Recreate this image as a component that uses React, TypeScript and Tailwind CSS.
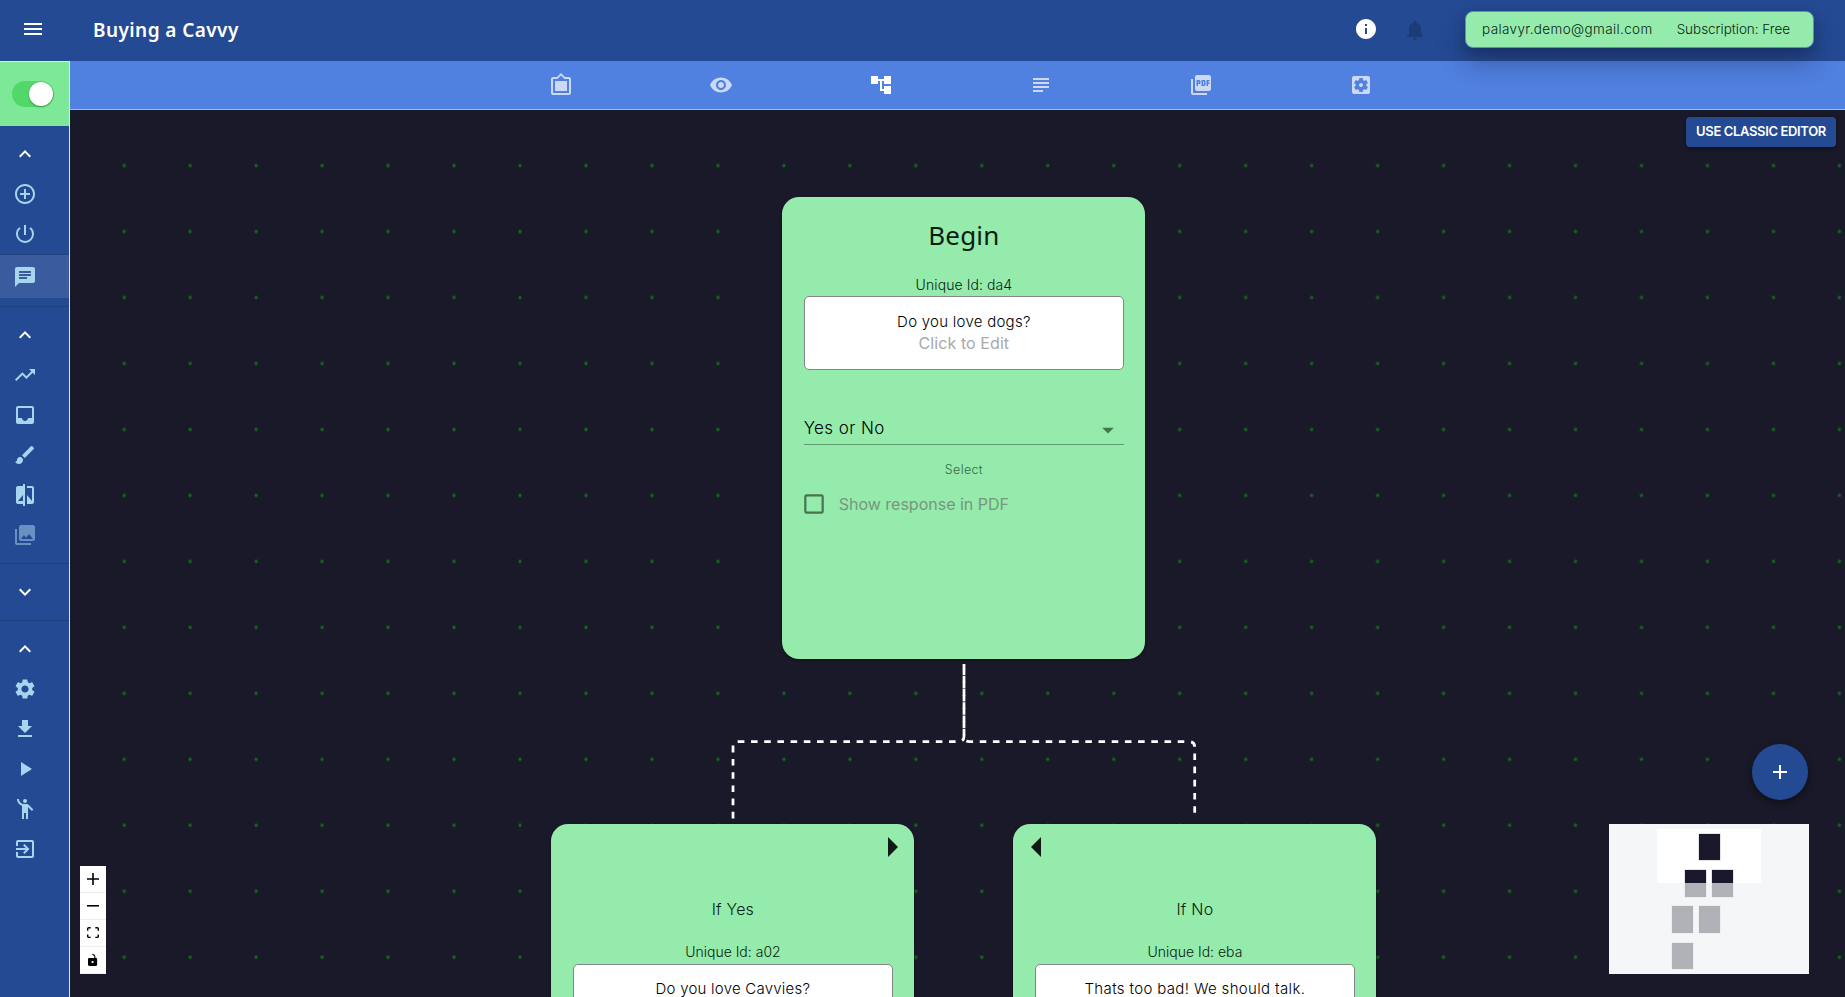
import type { ReactNode } from "react";
import type { IconType } from "react-icons";
import {
  MdAccountTree,
  MdAddCircleOutline,
  MdArrowDropDown,
  MdBrush,
  MdChat,
  MdCheckBoxOutlineBlank,
  MdCompare,
  MdEmojiPeople,
  MdExpandLess,
  MdExpandMore,
  MdFilterFrames,
  MdGetApp,
  MdInbox,
  MdInfo,
  MdMenu,
  MdNotifications,
  MdPhotoLibrary,
  MdPictureAsPdf,
  MdPlayArrow,
  MdPowerSettingsNew,
  MdSettings,
  MdSettingsApplications,
  MdSubject,
  MdTrendingUp,
  MdVisibility,
} from "react-icons/md";

function ExitIcon() {
  return (
    <svg viewBox="0 0 24 24" className="size-6" fill="currentColor">
      <path d="M10.09 15.59 11.5 17l5-5-5-5-1.41 1.41L12.67 11H3v2h9.67l-2.58 2.59zM19 3H5a2 2 0 0 0-2 2v4h2V5h14v14H5v-4H3v4a2 2 0 0 0 2 2h14c1.1 0 2-.9 2-2V5c0-1.1-.9-2-2-2z" />
    </svg>
  );
}

function SideItem({ icon: Icon, className = "text-[#a8d5ee]" }: { icon: IconType; className?: string }) {
  return (
    <div className={`flex h-10 items-center pl-[13px] ${className}`}>
      <Icon size={24} />
    </div>
  );
}

function Divider() {
  return <div className="my-2 h-px bg-[#203f7e]" />;
}

function Sidebar() {
  return (
    <aside className="flex w-[70px] shrink-0 flex-col border-r border-[#dfe3ec] bg-[#244a93]">
      <div className="flex h-[65px] items-center border-t border-[#d6f3df] bg-[#7de998] pb-px pl-3">
        <div className="flex h-[26px] w-[42px] items-center justify-end rounded-full bg-[#52d869] pr-px">
          <div className="size-6 rounded-full bg-white shadow-[0_1px_2px_rgba(0,0,0,0.35)]" />
        </div>
      </div>
      <div className="h-2" />
      <SideItem icon={MdExpandLess} className="text-white" />
      <SideItem icon={MdAddCircleOutline} />
      <SideItem icon={MdPowerSettingsNew} />
      <div className="flex h-11 items-center border-t border-[#23437f] bg-[#3a5c9e] pl-[13px] text-[#a8d5ee]">
        <MdChat size={24} />
      </div>
      <Divider />
      <SideItem icon={MdExpandLess} className="text-white" />
      <SideItem icon={MdTrendingUp} />
      <SideItem icon={MdInbox} />
      <SideItem icon={MdBrush} />
      <SideItem icon={MdCompare} />
      <SideItem icon={MdPhotoLibrary} className="text-[#6a90c2]" />
      <Divider />
      <SideItem icon={MdExpandMore} className="text-white" />
      <Divider />
      <SideItem icon={MdExpandLess} className="text-white" />
      <SideItem icon={MdSettings} />
      <SideItem icon={MdGetApp} />
      <SideItem icon={MdPlayArrow} />
      <SideItem icon={MdEmojiPeople} />
      <div className="flex h-10 items-center pl-[13px] text-[#a8d5ee]">
        <ExitIcon />
      </div>
    </aside>
  );
}

function Header() {
  return (
    <header className="relative z-10 flex h-[61px] shrink-0 items-center bg-[#244a93] pr-[31px] pb-[2px] pl-[21px] text-white">
      <MdMenu size={24} className="-mt-px" />
      <h1 className="ml-12 font-['Noto_Sans',sans-serif] text-[19px] leading-[30px] font-semibold tracking-[0.42px]">
        Buying a Cavvy
      </h1>
      <div className="ml-auto flex items-center">
        <MdInfo size={24} className="-mt-px" />
        <MdNotifications size={24} className="ml-[25px] text-[#1d3b76]" />
        <div className="ml-[38px] flex h-[37px] w-[349px] items-center rounded-lg border border-[#5f86dd] bg-[#94ebab] pl-4 text-[13.5px] text-[#0c2415] shadow-[0_14px_26px_rgba(16,24,50,0.36),0_4px_10px_rgba(16,24,50,0.25)]">
          <span className="tracking-[0.37px]">palavyr.demo@gmail.com</span>
          <span className="ml-6 tracking-[-0.03px]">Subscription: Free</span>
        </div>
      </div>
    </header>
  );
}

const tabs: { icon: IconType; active?: boolean }[] = [
  { icon: MdFilterFrames },
  { icon: MdVisibility },
  { icon: MdAccountTree, active: true },
  { icon: MdSubject },
  { icon: MdPictureAsPdf },
  { icon: MdSettingsApplications },
];

function TabBar() {
  return (
    <nav className="flex h-[49px] shrink-0 justify-center border-b border-[#b4b8c6] bg-[#5080e0] pl-[7px]">
      {tabs.map(({ icon: Icon, active }, i) => (
        <div key={i} className={`flex w-40 items-center justify-center ${active ? "text-white" : "text-[#cbd9f6]"}`}>
          <Icon size={24} />
        </div>
      ))}
    </nav>
  );
}

function Dots() {
  return (
    <svg className="absolute inset-0 size-full">
      <defs>
        <pattern id="dots" x="21.2" y="22.6" width="65.97" height="65.97" patternUnits="userSpaceOnUse">
          <circle cx="33" cy="33" r="1.7" fill="#0b6f12" />
        </pattern>
      </defs>
      <rect width="100%" height="100%" fill="url(#dots)" />
    </svg>
  );
}

function Edges() {
  return (
    <svg className="absolute inset-0 size-full" fill="none" stroke="#fff" strokeWidth="2.75" strokeDasharray="6.6 6.6">
      <path strokeDashoffset="-4.6" d="M894 554V626.2Q894 631.7 888.5 631.7H668.5Q663 631.7 663 637.2V709.5" />
      <path strokeDashoffset="1.3" d="M894 554V626.2Q894 631.7 899.5 631.7H1119.2Q1124.7 631.7 1124.7 637.2V709.5" />
    </svg>
  );
}

function MessageBox({ text, className, boxClass }: { text: string; className: string; boxClass: string }) {
  return (
    <div className={`h-[73.5px] rounded-[5px] border border-[#858585] bg-white text-center leading-[22px] ${boxClass}`}>
      <p className={`text-[15px] text-black ${className}`}>{text}</p>
      <p className="text-base leading-[21.5px] font-normal tracking-[0.08px] text-[#a9a9a9]">Click to Edit</p>
    </div>
  );
}

function Card({ className, children }: { className: string; children: ReactNode }) {
  return (
    <section
      className={`absolute h-[462px] w-[363px] rounded-[17px] bg-[#94ebab] px-[21.3px] text-[#0b1d12] shadow-[0_1px_3px_rgba(0,0,0,0.5)] ${className}`}
    >
      {children}
    </section>
  );
}

function BeginCard() {
  return (
    <Card className="top-[87.2px] left-[712.4px] pt-[18px]">
      <h2 className="text-center font-['Noto_Sans',sans-serif] text-[26px] leading-10 font-normal tracking-[0.2px]">Begin</h2>
      <p className="mt-5 mb-px text-center text-sm leading-5 tracking-[0.08px]">Unique Id: da4</p>
      <MessageBox text="Do you love dogs?" className="tracking-[0.26px]" boxClass="pt-[14px]" />
      <div className="mt-[46px] flex h-[28.5px] justify-between">
        <span className="text-[17px] leading-6 tracking-[0.4px] text-black">Yes or No</span>
        <MdArrowDropDown size={28} className="mr-[2px] text-[#47734f]" />
      </div>
      <div className="h-px bg-[#5f9b6f]" />
      <p className="mt-[15px] text-center text-[12.5px] leading-5 tracking-[0.35px] text-[#37684a]">Select</p>
      <div className="mt-3 flex h-6 items-center">
        <MdCheckBoxOutlineBlank size={26} className="-ml-[3px] text-[#47734f]" />
        <span className="ml-3 text-base leading-6 font-normal text-[#7a957f]">Show response in PDF</span>
      </div>
    </Card>
  );
}

function BranchCard(props: { title: string; id: string; text: string; textClass: string; side: "left" | "right"; className: string }) {
  return (
    <Card className={`pt-[13px] ${props.className}`}>
      <div className={`flex h-[60px] ${props.side === "right" ? "-mr-[5px] justify-end" : "-ml-[4px]"}`}>
        <svg viewBox="0 0 10 20" className="h-5 w-[10px]" fill="#101a14">
          <path d={props.side === "right" ? "M0 0 10 10 0 20Z" : "M10 0 0 10 10 20Z"} />
        </svg>
      </div>
      <h3 className="text-center text-base leading-6 font-light tracking-[0.2px]">{props.title}</h3>
      <p className="mt-[21px] mb-[2px] text-center text-sm leading-5">Unique Id: {props.id}</p>
      <MessageBox text={props.text} className={props.textClass} boxClass="pt-[13px]" />
    </Card>
  );
}

function Controls() {
  const row = "flex h-[27px] items-center justify-center border-b border-[#eee]";
  return (
    <div className="absolute top-[756px] left-[10px] w-[26px] bg-white">
      <div className={row}>
        <svg viewBox="0 0 32 32" className="size-3">
          <path d="M32 18.133H18.133V32h-4.266V18.133H0v-4.266h13.867V0h4.266v13.867H32z" />
        </svg>
      </div>
      <div className={row}>
        <svg viewBox="0 0 32 5" className="w-3">
          <path d="M0 0h32v4.2H0z" />
        </svg>
      </div>
      <div className={row}>
        <svg viewBox="0 0 32 30" className="w-3">
          <path d="M3.692 4.63c0-.53.4-.938.939-.938h5.215V0H4.708C2.13 0 0 2.054 0 4.63v5.216h3.692V4.631zM27.354 0h-5.2v3.692h5.17c.53 0 .984.4.984.939v5.215H32V4.631A4.624 4.624 0 0027.354 0zm.954 24.83c0 .532-.4.94-.939.94h-5.215v3.768h5.215c2.577 0 4.631-2.13 4.631-4.707v-5.139h-3.692v5.139zm-23.677.94c-.531 0-.939-.4-.939-.94v-5.138H0v5.139c0 2.577 2.13 4.707 4.708 4.707h5.138V25.77H4.631z" />
        </svg>
      </div>
      <div className={row}>
        <svg viewBox="0 0 25 32" className="h-3">
          <path d="M21.333 10.667H19.81V7.619C19.81 3.429 16.38 0 12.19 0c-4.114 1.828-1.37 2.133.305 2.438 1.676.305 4.42 2.59 4.42 5.181v3.048H3.047A3.056 3.056 0 000 13.714v15.238A3.056 3.056 0 003.048 32h18.285a3.056 3.056 0 003.048-3.048V13.714a3.056 3.056 0 00-3.048-3.047zM12.19 24.533a3.056 3.056 0 01-3.047-3.047 3.056 3.056 0 013.047-3.048 3.056 3.056 0 013.048 3.048 3.056 3.056 0 01-3.048 3.047z" />
        </svg>
      </div>
    </div>
  );
}

const miniNodes = [
  [90, 10, 26],
  [76, 46, 27],
  [103, 46, 27],
  [63, 82, 27],
  [90, 82, 27],
  [63, 119, 26],
];

function MiniMap() {
  return (
    <svg viewBox="0 0 200 150" className="absolute top-[714px] left-[1539px] h-[150px] w-[200px] bg-white">
      {miniNodes.map(([x, y, h]) => (
        <g key={`${x}-${y}`}>
          <rect x={x - 0.6} y={y - 0.6} width="22.2" height={h + 1.2} fill="#d3d3d8" />
          <rect x={x} y={y} width="21" height={h} fill="#1a192b" />
        </g>
      ))}
      <path d="M0 0h200v150H0zM48.3 4.7v54.3h103.7v-54.3z" fillRule="evenodd" fill="#f0f2f3" fillOpacity="0.7" />
    </svg>
  );
}

function Canvas() {
  return (
    <main className="relative flex-1 overflow-hidden bg-[#1a1929]">
      <Dots />
      <Edges />
      <BeginCard />
      <BranchCard
        title="If Yes"
        id="a02"
        text="Do you love Cavvies?"
        textClass="tracking-[0.23px]"
        side="right"
        className="top-[714px] left-[481.4px]"
      />
      <BranchCard
        title="If No"
        id="eba"
        text="Thats too bad! We should talk."
        textClass="tracking-[0.35px]"
        side="left"
        className="top-[714px] left-[943.4px]"
      />
      <button className="absolute top-[7px] right-[9px] flex h-[30px] w-[150px] items-center justify-center rounded bg-[#244a93] text-[13px] font-semibold tracking-[-0.36px] whitespace-nowrap text-white shadow-[0_2px_4px_rgba(0,0,0,0.4)]">
        USE CLASSIC EDITOR
      </button>
      <button className="absolute top-[634px] left-[1682px] flex size-14 items-center justify-center rounded-full bg-[#244a93] text-white shadow-[0_3px_8px_rgba(0,0,0,0.45)]">
        <svg viewBox="0 0 24 24" className="size-6" fill="currentColor">
          <path d="M19 13h-6v6h-2v-6H5v-2h6V5h2v6h6v2z" />
        </svg>
      </button>
      <Controls />
      <MiniMap />
    </main>
  );
}

export default function App() {
  return (
    <div className="flex h-[997px] w-[1845px] flex-col overflow-hidden bg-[#1a1929] font-['Inter',sans-serif] font-light">
      <Header />
      <div className="flex min-h-0 flex-1">
        <Sidebar />
        <div className="flex min-w-0 flex-1 flex-col">
          <TabBar />
          <Canvas />
        </div>
      </div>
    </div>
  );
}
